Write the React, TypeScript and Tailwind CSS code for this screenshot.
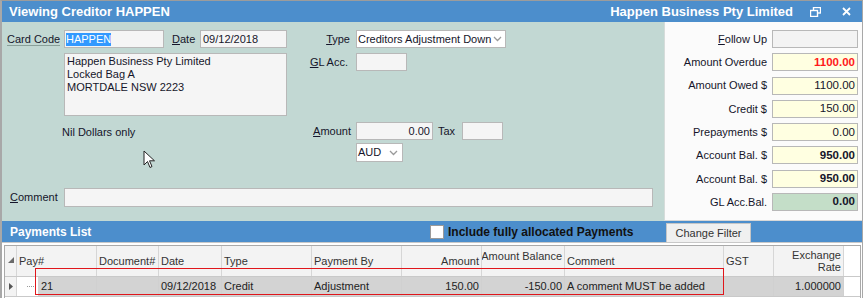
import React from 'react'

interface Col {
  label: string
  w: number
  align?: 'left' | 'right'
  top?: boolean
  value: string
}

const cols: Col[] = [
  { label: 'Pay#', w: 80, value: '21' },
  { label: 'Document#', w: 62, value: '' },
  { label: 'Date', w: 63, value: '09/12/2018' },
  { label: 'Type', w: 90, value: 'Credit' },
  { label: 'Payment By', w: 90, value: 'Adjustment' },
  { label: 'Amount', w: 80, align: 'right', value: '150.00' },
  { label: 'Amount Balance', w: 83, align: 'right', top: true, value: '-150.00' },
  { label: 'Comment', w: 159, value: 'A comment MUST be added' },
  { label: 'GST', w: 50, value: '' },
  { label: 'Exchange Rate', w: 70, align: 'right', value: '1.000000' },
]

const summary = [
  { label: 'Follow Up', u: 'F', rest: 'ollow Up', value: '', tone: 'gray' },
  { label: 'Amount Overdue', value: '1100.00', tone: 'overdue' },
  { label: 'Amount Owed $', value: '1100.00', tone: 'yellow' },
  { label: 'Credit $', value: '150.00', tone: 'yellow' },
  { label: 'Prepayments $', value: '0.00', tone: 'yellow' },
  { label: 'Account Bal. $', value: '950.00', tone: 'bold' },
  { label: 'Account Bal. $', value: '950.00', tone: 'bold' },
  { label: 'GL Acc.Bal.', value: '0.00', tone: 'green' },
]

function Box({ className = '', children }: { className?: string; children?: React.ReactNode }) {
  return (
    <div className={`h-[18px] border border-[#b8b8b8] bg-[#f5f5f5] flex items-center px-[2px] ${className}`}>
      {children}
    </div>
  )
}

function Chevron() {
  return (
    <svg width="9" height="6" viewBox="0 0 9 6" className="shrink-0">
      <path d="M1 1 L4.5 4.5 L8 1" stroke="#9a9a9a" strokeWidth="1.3" fill="none" />
    </svg>
  )
}

export default function App() {
  return (
    <div className="relative w-[863px] h-[298px] overflow-hidden bg-white border-t border-[#9c9c9c] border-l-2 border-l-[#a8a8a8] border-r border-r-[#a8a8a8] font-['Liberation_Sans',Arial,sans-serif] text-[11px] text-[#15152a]">
      {/* Title bar */}
      <div className="h-[21px] bg-[#4c8ecc] flex items-center text-white font-bold text-[13px]">
        <div className="pl-[7px] flex-1">Viewing Creditor HAPPEN</div>
        <div>Happen Business Pty Limited</div>
        <svg width="11" height="10" viewBox="0 0 11 10" className="ml-[17px]">
          <rect x="3.5" y="0.5" width="7" height="5.5" fill="none" stroke="white" strokeWidth="1.4" />
          <rect x="0.5" y="3.5" width="7" height="6" fill="#4c8ecc" stroke="white" strokeWidth="1.4" />
        </svg>
        <svg width="9" height="9" viewBox="0 0 9 9" className="ml-[21px] mr-[11px]">
          <path d="M1 1 L8 8 M8 1 L1 8" stroke="white" strokeWidth="1.8" />
        </svg>
      </div>

      {/* Form area */}
      <div className="flex h-[199px]">
        {/* Left panel */}
        <div className="w-[663px] bg-[#c2d8d3] pt-[8px] border-r border-[#d6dcda]">
          <div className="flex items-center h-[18px]">
            <div className="w-[62px] pl-[5px]">
              <span className="border-b border-[#8aa09a] leading-[12px]">Card Code</span>
            </div>
            <Box className="w-[100px]">
              <span className="bg-[#3399ff] text-white leading-[13px] -ml-[1px]">HAPPEN</span>
            </Box>
            <div className="w-[36px] pl-[8px]">
              <span className="underline">D</span>ate
            </div>
            <Box className="w-[87px]">09/12/2018</Box>
            <div className="w-[69px] text-right pr-[6px]">
              <span className="underline">T</span>ype
            </div>
            <div className="w-[150px] h-[18px] border border-[#b8b8b8] bg-white flex items-center pl-[1px] pr-[3px] overflow-hidden">
              <span className="flex-1 whitespace-nowrap overflow-hidden">Creditors Adjustment Down</span>
              <Chevron />
            </div>
          </div>

          <div className="flex mt-[5px]">
            <div className="w-[62px]" />
            <div className="w-[223px] flex flex-col">
              <div className="h-[63px] border border-[#b8b8b8] bg-[#f5f5f5] px-[2px] pt-[1px] leading-[13px]">
                <div>Happen Business Pty Limited</div>
                <div>Locked Bag A</div>
                <div>MORTDALE NSW 2223</div>
              </div>
              <div className="mt-[8px] -ml-[2px]">Nil Dollars only</div>
            </div>
            <div className="flex flex-col">
              <div className="flex items-center h-[18px]">
                <div className="w-[69px] text-right pr-[8px]">
                  <span className="underline">G</span>L Acc.
                </div>
                <Box className="w-[51px]" />
              </div>
              <div className="flex items-center h-[18px] mt-[51px]">
                <div className="w-[69px] text-right pr-[5px]">
                  <span className="underline">A</span>mount
                </div>
                <Box className="w-[77px] justify-end">0.00</Box>
                <div className="w-[29px] pl-[5px]">Tax</div>
                <Box className="w-[41px]" />
              </div>
              <div className="flex mt-[3px] ml-[69px]">
                <div className="w-[47px] h-[19px] border border-[#b8b8b8] bg-white flex items-center pl-[1px] pr-[4px]">
                  <span className="flex-1">AUD</span>
                  <Chevron />
                </div>
              </div>
            </div>
          </div>

          <div className="flex items-center h-[19px] mt-[26px]">
            <div className="w-[62px] pl-[8px]">
              <span className="underline">C</span>omment
            </div>
            <div className="w-[589px] h-[19px] border border-[#b8b8b8] bg-[#f5f5f5]" />
          </div>
        </div>

        {/* Right panel */}
        <div className="flex-1 bg-[#fbfbfb] pt-[8px] pr-[4px] flex flex-col gap-[5.3px] border-b border-[#d8d8d8]">
          {summary.map((s, i) => {
            const tone =
              s.tone === 'gray'
                ? 'bg-[#f3f3f3]'
                : s.tone === 'green'
                ? 'bg-[#c4dec8] font-bold'
                : s.tone === 'overdue'
                ? 'bg-[#ffffe1] text-[#ff1a1a] font-bold'
                : s.tone === 'bold'
                ? 'bg-[#ffffe1] font-bold'
                : 'bg-[#ffffe1]'
            return (
              <div key={i} className="flex items-center justify-end h-[18px]">
                <div className="text-right pr-[5px]">
                  {s.u ? (
                    <>
                      <span className="underline">{s.u}</span>
                      {s.rest}
                    </>
                  ) : (
                    s.label
                  )}
                </div>
                <div className={`w-[86px] h-[18px] border border-[#b8b8b8] flex items-center justify-end pr-[2px] text-[11.5px] ${tone}`}>
                  {s.value}
                </div>
              </div>
            )
          })}
        </div>
      </div>

      {/* Payments list bar */}
      <div className="h-[21px] bg-[#4c8ecc] flex items-center">
        <div className="w-[428px] pl-[8px] text-white font-bold text-[12px]">Payments List</div>
        <div className="w-[14px] h-[14px] bg-white border border-[#9a9a9a]" />
        <div className="ml-[4px] font-bold text-[12px] text-[#111] flex-1">Include fully allocated Payments</div>
        <div className="self-end w-[85px] h-[19px] bg-[#f0f0f0] border border-[#c6c6c6] border-b-0 flex items-center justify-center text-[#333]">
          Change Filter
        </div>
        <div className="w-[111px]" />
      </div>

      {/* Grid */}
      <div className="h-[56px] bg-white pt-[2px] pl-[2px] pr-[1px] border-t border-[#c8c8c8]">
        <div className="h-full border border-[#a9a9a9] border-b-0 bg-white">
          {/* Header */}
          <div className="flex h-[31px] border-b border-[#c9c9c9]">
            <div className="w-[12px] bg-[#f3f3f3] border-r border-[#d6d6d6] relative">
              <svg width="6" height="6" viewBox="0 0 6 6" className="absolute left-[3px] top-[11px]">
                <path d="M6 0 L6 6 L0 6 Z" fill="#6a6a6a" />
              </svg>
            </div>
            {cols.map((c) => (
              <div
                key={c.label}
                style={{ width: c.w }}
                className={`bg-[#f3f3f3] border-r border-[#d6d6d6] flex px-[2px] leading-[12px] text-[#333] whitespace-nowrap overflow-hidden ${
                  c.align === 'right' ? 'justify-end text-right' : ''
                } ${c.top ? 'items-start pt-[4px]' : 'items-center pb-[1px]'}`}
              >
                {c.label === 'Exchange Rate' ? (
                  <div>
                    Exchange
                    <br />
                    Rate
                  </div>
                ) : (
                  c.label
                )}
              </div>
            ))}
          </div>
          {/* Data row */}
          <div className="flex h-[20px] border-b border-[#c9c9c9]">
            <div className="w-[12px] bg-[#f3f3f3] border-r border-[#d6d6d6] flex items-center justify-center">
              <svg width="4" height="7" viewBox="0 0 4 7">
                <path d="M0 0 L4 3.5 L0 7 Z" fill="#555" />
              </svg>
            </div>
            {cols.map((c, i) => (
              <div
                key={c.label}
                style={{ width: c.w }}
                className={`border-r border-[#d0d0d0] flex items-center text-[#222] whitespace-nowrap ${
                  c.align === 'right' ? 'justify-end' : ''
                } ${i === 0 ? 'bg-white pl-0' : 'bg-[#d3d3d3] px-[2px]'}`}
              >
                {i === 0 ? (
                  <>
                    <div className="w-[21px] h-full flex items-center pl-[10px]">
                      <div className="w-[9px] border-t border-dotted border-[#9a9a9a]" />
                    </div>
                    <div className="flex-1 h-full bg-[#d3d3d3] flex items-center pl-[3px]">{c.value}</div>
                  </>
                ) : (
                  c.value
                )}
              </div>
            ))}
          </div>
        </div>
      </div>

      {/* Red highlight annotation */}
      <div className="absolute left-[33px] top-[267px] w-[689px] h-[27px] border border-[#e0161b] pointer-events-none" />

      {/* Mouse cursor */}
      <svg width="14" height="20" viewBox="0 0 14 20" className="absolute left-[141px] top-[149px]">
        <path d="M1 1 L1 15 L4.5 11.5 L7 17.5 L9 16.5 L6.5 10.8 L11.5 10.8 Z" fill="white" stroke="#222" strokeWidth="1" strokeLinejoin="round" />
      </svg>
    </div>
  )
}
